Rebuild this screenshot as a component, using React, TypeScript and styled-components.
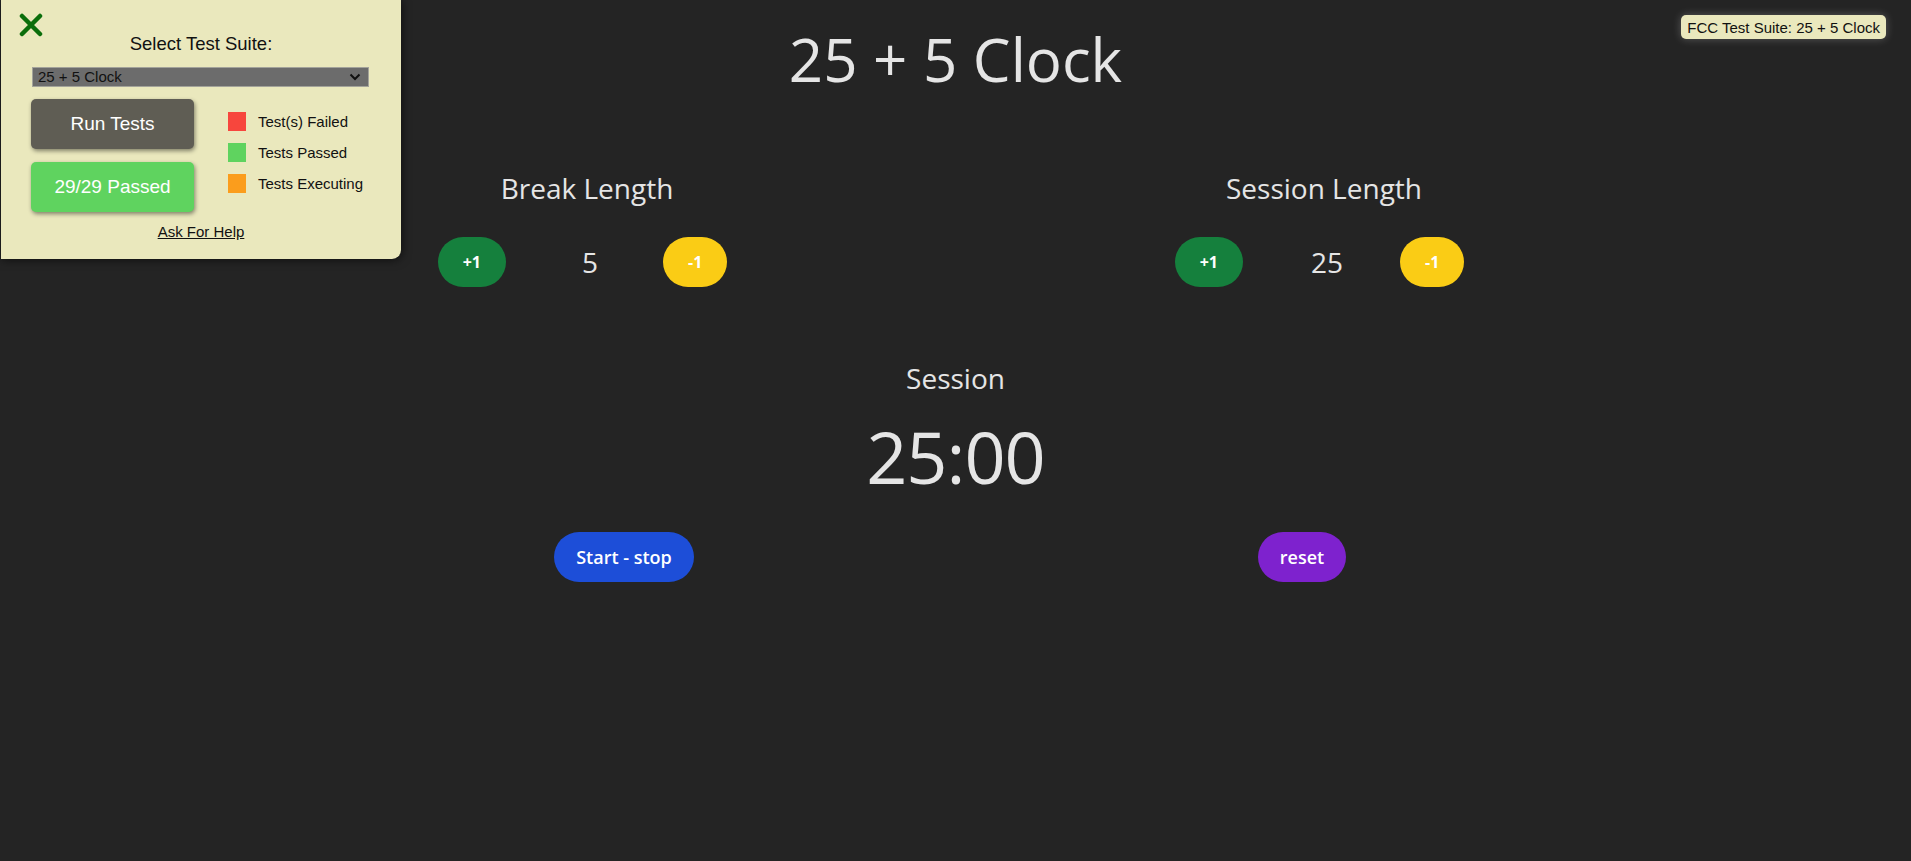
import React from "react";
import styled, { createGlobalStyle } from "styled-components";

const GlobalStyle = createGlobalStyle`
  html, body {
    margin: 0;
    padding: 0;
    background: #242424;
  }
  body {
    font-family: "Open Sans", "Noto Sans", sans-serif;
    color: #e5e5e5;
  }
  * { box-sizing: border-box; }
`;

const Page = styled.main`
  position: relative;
  min-height: 861px;
  width: 100%;
  padding-top: 19px;
`;

const Title = styled.h1`
  margin: 0;
  font-size: 60px;
  line-height: 80px;
  font-weight: 400;
  text-align: center;
  color: #e5e5e5;
`;

const LengthsRow = styled.section`
  width: 1474px;
  margin: 69px auto 0;
  display: grid;
  grid-template-columns: 1fr 1fr;
`;

const LengthColumn = styled.div`
  display: flex;
  flex-direction: column;
  align-items: center;
`;

const Heading = styled.h2`
  margin: 0;
  font-size: 28px;
  line-height: 40px;
  font-weight: 400;
  color: #e5e5e5;
`;

const Stepper = styled.div`
  margin-top: 29px;
  padding-right: 9px;
  display: flex;
  align-items: center;
`;

const PillButton = styled.button<{ $bg: string; $size?: number; $weight?: number; $pad?: number }>`
  height: 50px;
  padding: 0 ${(p) => p.$pad ?? 25}px;
  border: none;
  border-radius: 9999px;
  background: ${(p) => p.$bg};
  color: #ffffff;
  font-family: "Open Sans", "Noto Sans", sans-serif;
  font-size: ${(p) => p.$size ?? 16}px;
  font-weight: ${(p) => p.$weight ?? 700};
  line-height: 1;
  cursor: pointer;
`;

const Value = styled.span`
  width: 157px;
  padding-left: 11px;
  text-align: center;
  font-size: 28px;
  line-height: 40px;
  color: #e5e5e5;
`;

const TimerLabel = styled.h2`
  margin: 71px 0 0;
  font-size: 28px;
  line-height: 40px;
  font-weight: 400;
  text-align: center;
  color: #e5e5e5;
`;

const TimerDisplay = styled.div`
  margin-top: 10px;
  font-size: 72px;
  line-height: 96px;
  font-weight: 400;
  text-align: center;
  letter-spacing: -1px;
  color: #e5e5e5;
`;

const ControlsRow = styled.div`
  margin-top: 28px;
  padding: 0 270px 0 285px;
  display: grid;
  grid-template-columns: 1fr 1fr;
  justify-items: center;
`;

/* ---------- FCC test panel ---------- */

const TestPanel = styled.aside`
  position: absolute;
  top: 0;
  left: 1px;
  width: 400px;
  height: 259px;
  background: #eae8bd;
  border-radius: 0 0 9px 0;
  box-shadow: 1px 1px 10px rgba(0, 0, 0, 0.6);
  font-family: "Liberation Sans", Arial, sans-serif;
  color: #111;
  padding-top: 33px;
`;

const CloseButton = styled.button`
  position: absolute;
  top: 12px;
  left: 16px;
  width: 28px;
  height: 26px;
  padding: 0;
  border: none;
  background: transparent;
  cursor: pointer;
  display: flex;
  align-items: center;
  justify-content: center;
`;

const PanelHeading = styled.div`
  font-size: 18.5px;
  line-height: 22px;
  text-align: center;
  color: #111;
`;

const SelectWrap = styled.div`
  position: relative;
  margin: 12px 0 0 31px;
  width: 337px;
  height: 20px;
`;

const SuiteSelect = styled.select`
  appearance: none;
  -webkit-appearance: none;
  width: 100%;
  height: 20px;
  margin: 0;
  padding: 0 5px;
  border: 1px solid #a3a39a;
  border-radius: 0;
  background: #6c6c6c;
  color: #111;
  font-family: "Liberation Sans", Arial, sans-serif;
  font-size: 15px;
  line-height: 18px;
`;

const Chevron = styled.svg`
  position: absolute;
  right: 8px;
  top: 6px;
  pointer-events: none;
`;

const ActionRow = styled.div`
  margin: 12px 0 0 30px;
  display: flex;
  gap: 34px;
`;

const ActionColumn = styled.div`
  display: flex;
  flex-direction: column;
  gap: 13px;
`;

const PanelButton = styled.button<{ $bg: string }>`
  width: 163px;
  height: 50px;
  border: none;
  border-radius: 5px;
  background: ${(p) => p.$bg};
  color: #fff;
  font-family: "Liberation Sans", Arial, sans-serif;
  font-size: 19px;
  box-shadow: 1px 2px 4px rgba(0, 0, 0, 0.45);
  cursor: pointer;
`;

const Legend = styled.ul`
  list-style: none;
  margin: 13px 0 0;
  padding: 0;
  display: flex;
  flex-direction: column;
  gap: 13px;
`;

const LegendItem = styled.li`
  display: flex;
  align-items: center;
  gap: 12px;
  height: 18px;
  font-size: 15px;
  color: #111;
`;

const Swatch = styled.span<{ $color: string }>`
  width: 18px;
  height: 19px;
  background: ${(p) => p.$color};
`;

const HelpLink = styled.a`
  display: block;
  margin-top: 11px;
  font-size: 15px;
  line-height: 18px;
  text-align: center;
  color: #111;
  text-decoration: underline;
`;

const SuiteBadge = styled.div`
  position: absolute;
  top: 15px;
  right: 25px;
  height: 24px;
  padding: 0 6px;
  display: flex;
  align-items: center;
  background: #eae8bd;
  border-radius: 5px;
  box-shadow: 0 0 8px rgba(255, 255, 255, 0.25);
  font-family: "Liberation Sans", Arial, sans-serif;
  font-size: 15px;
  color: #111;
`;

type LengthProps = { label: string; value: number };

function LengthControl({ label, value }: LengthProps) {
  return (
    <LengthColumn>
      <Heading>{label}</Heading>
      <Stepper>
        <PillButton $bg="#15803d">+1</PillButton>
        <Value>{value}</Value>
        <PillButton $bg="#facc15">-1</PillButton>
      </Stepper>
    </LengthColumn>
  );
}

export default function App() {
  return (
    <>
      <GlobalStyle />
      <Page>
        <Title>25 + 5 Clock</Title>
        <LengthsRow>
          <LengthControl label="Break Length" value={5} />
          <LengthControl label="Session Length" value={25} />
        </LengthsRow>
        <TimerLabel>Session</TimerLabel>
        <TimerDisplay>25:00</TimerDisplay>
        <ControlsRow>
          <PillButton $bg="#1d4ed8" $size={18} $weight={600} $pad={22}>
            Start - stop
          </PillButton>
          <PillButton $bg="#7e22ce" $size={18} $weight={600} $pad={22}>
            reset
          </PillButton>
        </ControlsRow>

        <TestPanel>
          <CloseButton aria-label="close">
            <svg width="26" height="24" viewBox="0 0 26 24">
              <path
                d="M4 3 L22 21 M22 3 L4 21"
                stroke="#0b6e0b"
                strokeWidth="4.5"
                strokeLinecap="round"
                fill="none"
              />
            </svg>
          </CloseButton>
          <PanelHeading>Select Test Suite:</PanelHeading>
          <SelectWrap>
            <SuiteSelect defaultValue="clock">
              <option value="clock">25 + 5 Clock</option>
            </SuiteSelect>
            <Chevron width="12" height="8" viewBox="0 0 12 8">
              <path d="M1.5 1.5 L6 6 L10.5 1.5" stroke="#111" strokeWidth="2" fill="none" />
            </Chevron>
          </SelectWrap>
          <ActionRow>
            <ActionColumn>
              <PanelButton $bg="#5f5d54">Run Tests</PanelButton>
              <PanelButton $bg="#5fd35f">29/29 Passed</PanelButton>
            </ActionColumn>
            <Legend>
              <LegendItem>
                <Swatch $color="#f7463d" />
                Test(s) Failed
              </LegendItem>
              <LegendItem>
                <Swatch $color="#5fd35f" />
                Tests Passed
              </LegendItem>
              <LegendItem>
                <Swatch $color="#fb9d1c" />
                Tests Executing
              </LegendItem>
            </Legend>
          </ActionRow>
          <HelpLink href="#">Ask For Help</HelpLink>
        </TestPanel>

        <SuiteBadge>FCC Test Suite: 25 + 5 Clock</SuiteBadge>
      </Page>
    </>
  );
}
